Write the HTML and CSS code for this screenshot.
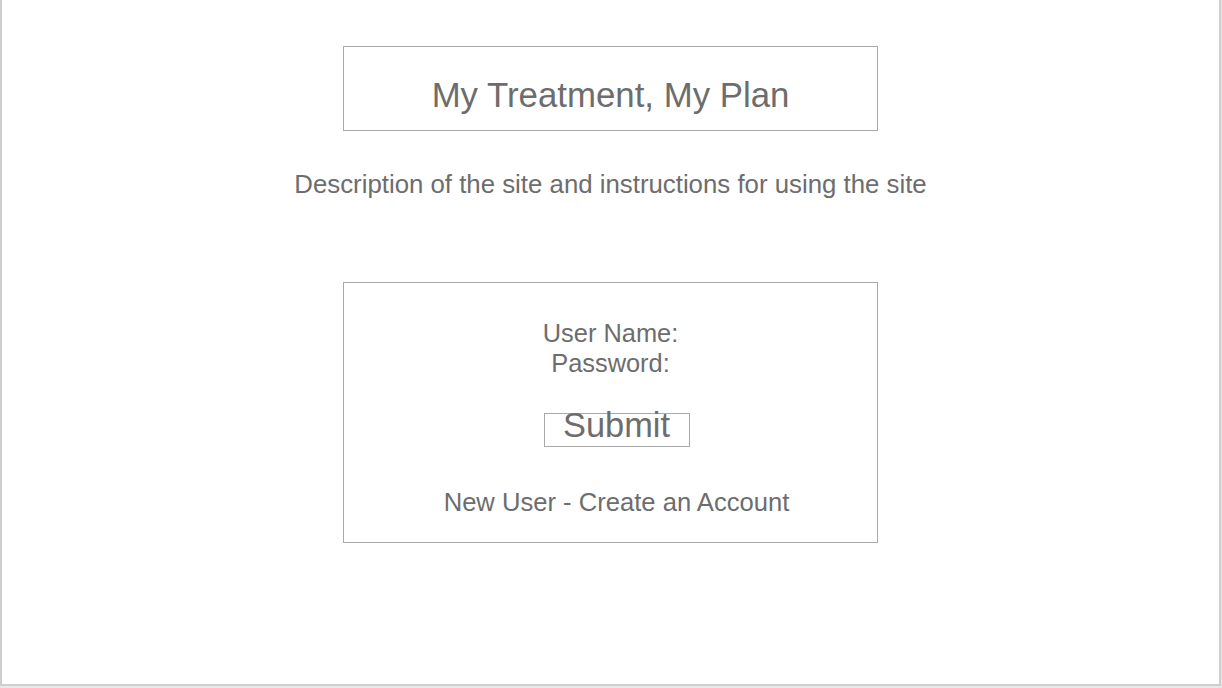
FILE: index.html
```html
<!DOCTYPE html>
<html lang="en">
<head>
<meta charset="utf-8">
<title>My Treatment, My Plan</title>
<link rel="stylesheet" href="styles.css">
</head>
<body>
<div class="frame">
  <div class="title-box">
    <h1 class="title">My Treatment, My Plan</h1>
  </div>
  <p class="desc">Description of the site and instructions for using the site</p>
  <div class="login">
    <div class="label">User Name:</div>
    <div class="label">Password:</div>
    <div class="actions">
      <div class="submit">Submit</div>
      <div class="new-user">New User - Create an Account</div>
    </div>
  </div>
</div>
</body>
</html>
```
FILE: styles.css
```css
html, body {
  margin: 0;
  padding: 0;
  background: #e9e9e9;
  height: 100%;
}
body {
  font-family: "Liberation Sans", Arial, Helvetica, sans-serif;
  color: #6d6d6d;
}
.frame {
  box-sizing: border-box;
  width: 1221px;
  height: 686px;
  background: #ffffff;
  border-left: 2px solid #cecece;
  border-right: 2px solid #cecece;
  border-bottom: 2px solid #cecece;
  display: flex;
  flex-direction: column;
  align-items: center;
}
.title-box {
  box-sizing: border-box;
  width: 535px;
  height: 85px;
  margin-top: 46px;
  border: 1px solid #a9a9a9;
  padding-top: 28px;
  text-align: center;
}
.title {
  margin: 0;
  font-size: 34.8px;
  font-weight: normal;
  line-height: 40px;
}
.desc {
  margin: 38px 0 0;
  font-size: 25.8px;
  line-height: 30px;
  text-align: center;
}
.login {
  box-sizing: border-box;
  width: 535px;
  height: 261px;
  margin-top: 83px;
  border: 1px solid #a9a9a9;
  padding-top: 35px;
  display: flex;
  flex-direction: column;
  align-items: center;
  font-size: 25.4px;
  line-height: 30px;
}
.actions {
  align-self: stretch;
  padding-left: 12px;
  display: flex;
  flex-direction: column;
  align-items: center;
}
.submit {
  box-sizing: border-box;
  width: 146px;
  height: 34px;
  margin-top: 35px;
  border: 1px solid #a9a9a9;
  font-size: 34.4px;
  line-height: 22px;
  text-align: center;
}
.new-user {
  margin-top: 40px;
  font-size: 25.6px;
}
```
